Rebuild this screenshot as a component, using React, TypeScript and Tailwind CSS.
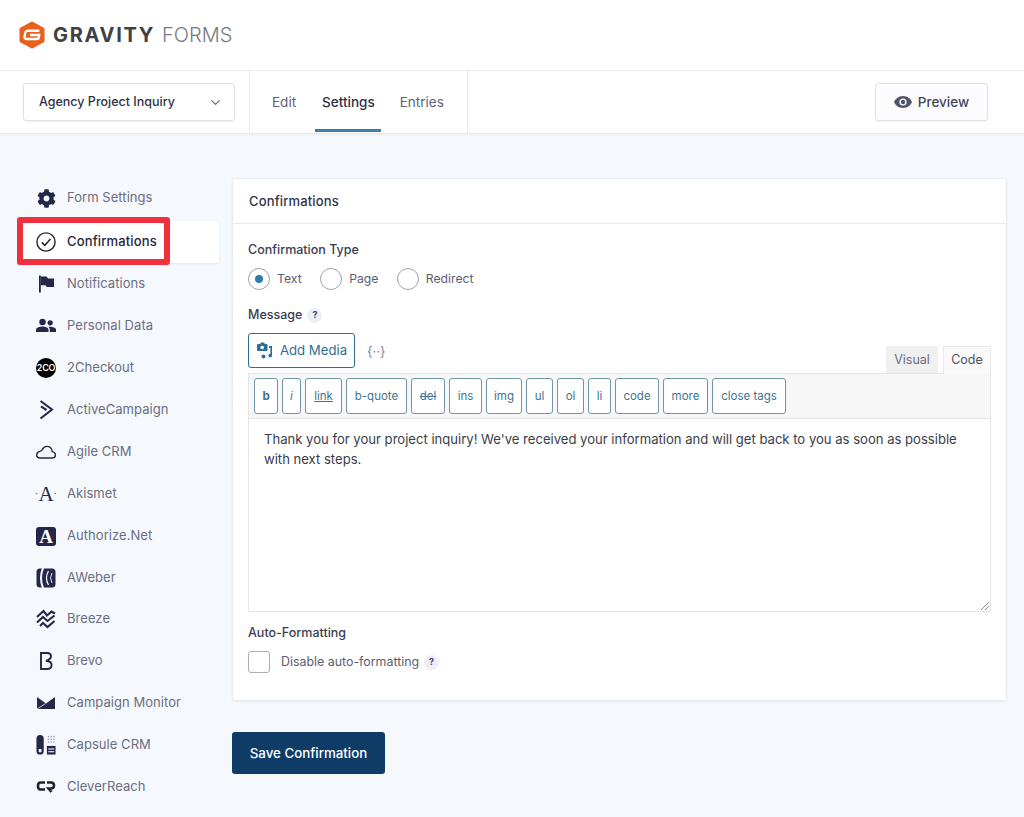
import React from 'react';
import { ChevronDown } from 'lucide-react';
import { FaCog } from 'react-icons/fa';

const NAVY = '#242748';

const GravityLogo = () => (
    <svg width="26" height="28" viewBox="0 0 26 28" className="shrink-0">
        <path d="M13 2 L24 8 V20 L13 26 L2 20 V8 Z" fill="#e8601c" stroke="#e8601c" strokeWidth="3" strokeLinejoin="round" />
        <path d="M20.4 9.8 H9 Q6.8 9.8 6.2 12 L5.6 15.4 Q5.2 18 7.6 18 H18 Q19.6 18 19.8 16.5 L20.2 14 H11" fill="none" stroke="#fff" strokeWidth="2.4" />
    </svg>
);

const CheckCircleIcon = () => (
    <svg width="20" height="20" viewBox="0 0 20 20" fill="none" stroke="#1f2433">
        <circle cx="10" cy="10" r="9.1" strokeWidth="1.4" />
        <path d="M5.8 10.4 L8.8 13.4 L14.4 7" strokeWidth="1.5" />
    </svg>
);

const FlagIcon = () => (
    <svg width="20" height="20" viewBox="0 0 20 20">
        <path d="M3 1.5 H4.8 V18.5 H3 Z" fill={NAVY} />
        <path d="M4.8 2.5 H10.5 L12 4.5 H18 V13 H10.8 L9.4 11.2 H4.8 Z" fill={NAVY} />
    </svg>
);

const PeopleIcon = () => (
    <svg width="20" height="20" viewBox="0 0 20 20" fill={NAVY}>
        <circle cx="6.5" cy="6" r="3.2" />
        <circle cx="14.2" cy="6.8" r="2.6" />
        <path d="M0 16 V13.8 C0 11.4 4 10.4 6.5 10.4 S12.5 11.4 12.5 13.8 V16 Z" />
        <path d="M13.8 16 V13.6 C13.8 12.6 13.4 11.6 12.6 10.9 C15 10.3 20 11.2 20 13.6 V16 Z" />
    </svg>
);

const TwoCheckoutIcon = () => (
    <span className="flex h-5 w-5 items-center justify-center overflow-hidden rounded-full bg-black text-[9px] font-semibold tracking-[-0.3px] text-white">
        2CO
    </span>
);

const ActiveCampaignIcon = () => (
    <svg width="20" height="20" viewBox="0 0 20 20" fill="none" stroke={NAVY} strokeWidth="2.1">
        <path d="M4.5 1 L16 9.5 L4.5 18.5" />
        <path d="M5 6.4 L10.5 10" />
    </svg>
);

const AgileCloudIcon = () => (
    <svg width="20" height="20" viewBox="0 0 20 20" fill="none" stroke={NAVY} strokeWidth="1.4">
        <path d="M4 16 H16 Q19.4 16 19.4 12.8 Q19.4 10 16.2 9.6 Q15.6 4.4 10.8 4.4 Q7.8 4.4 6.4 7.6 Q5.4 9 4 9.4 Q0.7 10.2 0.7 12.8 Q0.7 16 4 16 Z" />
    </svg>
);

const AkismetIcon = () => (
    <span className="flex h-5 w-5 items-center justify-center whitespace-nowrap font-['Liberation_Serif',serif] text-[21px] leading-none text-[#242748]">
        <span className="text-[10px]">·</span>A<span className="text-[10px]">·</span>
    </span>
);

const AuthorizeIcon = () => (
    <span className="flex h-[19px] w-5 items-center justify-center rounded-[3px] bg-[#242748] font-['Liberation_Serif',serif] text-[19px] font-bold leading-none text-white">
        A
    </span>
);

const AWeberIcon = () => (
    <svg width="20" height="20" viewBox="0 0 20 20">
        <rect x="0.5" y="0.5" width="19" height="19" rx="3.5" fill={NAVY} />
        <path d="M7.4 -1 Q2.6 10 7.4 21" fill="none" stroke="#f5f8fc" strokeWidth="2" />
        <path d="M12.5 3 Q8.4 10 12.5 17" fill="none" stroke="#f5f8fc" strokeWidth="1.3" />
        <path d="M16 5 Q13 10 16 15" fill="none" stroke="#f5f8fc" strokeWidth="0.9" />
    </svg>
);

const BreezeIcon = () => (
    <svg width="20" height="20" viewBox="0 0 20 20" fill="none" stroke={NAVY} strokeWidth="2.1">
        <path d="M1 8 L7.5 2 L11 6.5 L15.5 2.5 L19 4.5" />
        <path d="M1 13.5 L7 8 L11.5 12 L18.5 6.5" />
        <path d="M4 17 L7 14 L11.5 18 L18.5 12" />
    </svg>
);

const BrevoIcon = () => (
    <svg width="20" height="20" viewBox="0 0 20 20" fill="none" stroke={NAVY} strokeWidth="1.9">
        <path d="M5 2 H11.5 Q15 2 15 5.3 Q15 8.3 10 10 Q15.6 10 15.6 14 Q15.6 18 11 18 H5 Z" />
    </svg>
);

const CampaignMonitorIcon = () => (
    <svg width="20" height="20" viewBox="0 0 20 20">
        <path d="M1 4 L10 10.5 L19 4 V16 H1 Z" fill={NAVY} />
        <path d="M1 16 L9.5 10.6" stroke="#f5f8fc" strokeWidth="0.8" />
    </svg>
);

const CapsuleIcon = () => (
    <svg width="22" height="22" viewBox="0 0 22 22">
        <rect x="0.5" y="0" width="8" height="21.5" rx="4" fill={NAVY} />
        <path d="M3 15.5 H6 V18 L4.5 19.5 L3 18 Z" fill="#f5f8fc" />
        <g fill="#8d90a8">
            <rect x="13" y="1" width="1.4" height="1.4" />
            <rect x="16" y="1" width="1.4" height="1.4" />
            <rect x="19" y="1" width="1.4" height="1.4" />
            <rect x="13" y="4" width="1.4" height="1.4" />
            <rect x="16" y="4" width="1.4" height="1.4" />
            <rect x="19" y="4" width="1.4" height="1.4" />
            <rect x="13" y="7" width="1.4" height="1.4" />
            <rect x="16" y="7" width="1.4" height="1.4" />
            <rect x="19" y="7" width="1.4" height="1.4" />
        </g>
        <rect x="12" y="12" width="9.5" height="9.5" fill={NAVY} />
        <rect x="13.5" y="14.8" width="6.5" height="1.2" fill="#f5f8fc" />
        <rect x="13.5" y="17.8" width="6.5" height="1.2" fill="#f5f8fc" />
    </svg>
);

const CleverReachIcon = () => (
    <svg width="20" height="20" viewBox="0 0 20 20" fill="none" stroke="#1f2433" strokeWidth="2.6">
        <path d="M9 5.5 H4.5 Q2 5.5 2 9 Q2 12.5 4.5 12.5 H9" />
        <path d="M11 5.5 H15 Q18 5.5 18 8.5 Q18 11.5 15 11.5 H12.5 L15.5 15" />
    </svg>
);

const NAV_ITEMS = [
    { label: 'Form Settings', icon: <FaCog size={19} color={NAVY} />, height: 'h-[44px] mb-[1px]' },
    { label: 'Confirmations', icon: <CheckCircleIcon />, height: 'h-[42px]', active: true },
    { label: 'Notifications', icon: <FlagIcon />, height: 'h-[42px]' },
    { label: 'Personal Data', icon: <PeopleIcon />, height: 'h-[42px]' },
    { label: '2Checkout', icon: <TwoCheckoutIcon />, height: 'h-[42px]' },
    { label: 'ActiveCampaign', icon: <ActiveCampaignIcon />, height: 'h-[42px]' },
    { label: 'Agile CRM', icon: <AgileCloudIcon />, height: 'h-[42px]' },
    { label: 'Akismet', icon: <AkismetIcon />, height: 'h-[42px]' },
    { label: 'Authorize.Net', icon: <AuthorizeIcon />, height: 'h-[42px]' },
    { label: 'AWeber', icon: <AWeberIcon />, height: 'h-[41px]' },
    { label: 'Breeze', icon: <BreezeIcon />, height: 'h-[42px]' },
    { label: 'Brevo', icon: <BrevoIcon />, height: 'h-[42px]' },
    { label: 'Campaign Monitor', icon: <CampaignMonitorIcon />, height: 'h-[42px]' },
    { label: 'Capsule CRM', icon: <CapsuleIcon />, height: 'h-[42px]' },
    { label: 'CleverReach', icon: <CleverReachIcon />, height: 'h-[41px]' },
];

const TOOLBAR_BUTTONS = [
    { label: 'b', width: 'w-[24px]', extra: 'font-bold' },
    { label: 'i', width: 'w-[19px]', extra: 'italic' },
    { label: 'link', width: 'w-[37px]', extra: 'underline' },
    { label: 'b-quote', width: 'w-[61px]', extra: '' },
    { label: 'del', width: 'w-[34px]', extra: 'line-through' },
    { label: 'ins', width: 'w-[33px]', extra: '' },
    { label: 'img', width: 'w-[36px]', extra: '' },
    { label: 'ul', width: 'w-[27px]', extra: '' },
    { label: 'ol', width: 'w-[27px]', extra: '' },
    { label: 'li', width: 'w-[23px]', extra: '' },
    { label: 'code', width: 'w-[44px]', extra: '' },
    { label: 'more', width: 'w-[45px]', extra: '' },
    { label: 'close tags', width: 'w-[74px]', extra: '' },
];

const HelpBadge = () => (
    <span className="flex h-[15px] w-[15px] items-center justify-center rounded-full bg-[#eeeef8] text-[9px] font-bold text-[#3d4260]">?</span>
);

const Radio = ({ label, checked }: { label: string; checked?: boolean }) => (
    <div className="flex items-center gap-[7px]">
        <span className="flex h-[22px] w-[22px] items-center justify-center rounded-full border border-[#9ea3ac] bg-white">
            {checked && <span className="h-[8px] w-[8px] rounded-full bg-[#2f7cab]" />}
        </span>
        <span className="text-[12.2px] text-[#5b5e72]">{label}</span>
    </div>
);

export default function App() {
    return (
        <div className="h-[817px] w-[1024px] overflow-hidden bg-[#f5f8fc] font-['Inter',sans-serif] text-[13px]">
            <header className="flex h-[71px] items-center border-b border-[#e8eaee] bg-white pl-[19px]">
                <GravityLogo />
                <span className="ml-[8px] text-[20px] font-bold leading-none tracking-[1.7px] text-[#3f4145]">GRAVITY</span>
                <span className="ml-[7px] text-[20px] font-light leading-none tracking-[0px] text-[#77797d]">FORMS</span>
            </header>

            <div className="flex h-[63px] items-stretch border-b border-[#e6e9ee] bg-white shadow-[0_1px_2px_rgba(30,40,70,0.05)]">
                <div className="flex w-[250px] items-center border-r border-[#e8eaee] pl-[23px]">
                    <div className="flex h-[38px] w-[212px] items-center justify-between rounded-[3px] border border-[#dcdfe6] bg-white pl-[15px] pr-[11px] shadow-[0_1px_2px_rgba(30,40,70,0.06)]">
                        <span className="text-[12.5px] font-medium text-[#2f3245]">Agency Project Inquiry</span>
                        <ChevronDown size={15} color="#6e7184" />
                    </div>
                </div>
                <nav className="flex w-[218px] items-stretch border-r border-[#e8eaee] pl-[22px] pt-[1px] text-[13.5px]">
                    <div className="flex items-center text-[#5f6275]">Edit</div>
                    <div className="ml-[26px] flex items-center font-medium text-[#2f3245]">Settings</div>
                    <div className="ml-[25px] flex items-center text-[#5f6275]">Entries</div>
                </nav>
                <div className="flex flex-1 items-center justify-end pr-[36px]">
                    <div className="flex h-[38px] w-[113px] items-center justify-center gap-[6px] rounded-[3px] border border-[#e0e2e8] bg-[#fcfcfe] shadow-[0_1px_2px_rgba(30,40,70,0.06)]">
                        <svg width="18" height="12" viewBox="0 0 18 12">
                            <path d="M9 0 C13.5 0 16.8 3 18 6 C16.8 9 13.5 12 9 12 C4.5 12 1.2 9 0 6 C1.2 3 4.5 0 9 0 Z" fill="#50546e" />
                            <circle cx="9" cy="6" r="3.6" fill="#fff" />
                            <circle cx="9" cy="6" r="2.2" fill="#50546e" />
                        </svg>
                        <span className="text-[13.5px] font-medium text-[#42465c]">Preview</span>
                    </div>
                </div>
            </div>

            <div className="flex items-start">
                <aside className="mt-[42px] w-[232px] shrink-0">
                    {NAV_ITEMS.map((item) => (
                        <div key={item.label} className={`flex ${item.height} items-center`}>
                            <div className={`ml-[20px] flex h-full w-[199px] items-center gap-[16px] rounded-r-[3px] pl-[16px] ${item.active ? 'bg-white shadow-[0_1px_2px_rgba(30,40,70,0.08)]' : ''}`}>
                                <span className="flex w-[20px] shrink-0 items-center justify-center">{item.icon}</span>
                                <span className={`-ml-[5px] text-[13px] ${item.active ? 'font-medium tracking-[0.15px] text-[#23263a]' : 'tracking-[0.05px] text-[#6b6e82]'}`}>{item.label}</span>
                            </div>
                        </div>
                    ))}
                </aside>

                <main className="w-[775px]">
                    <section className="mt-[44px] h-[523px] rounded-[3px] border border-[#e8ebf0] bg-white shadow-[0_1px_3px_rgba(30,40,70,0.05)]">
                        <h2 className="flex h-[45px] items-center border-b border-[#e8ebf0] pl-[16px] pt-[2px] text-[13px] font-medium tracking-[0.15px] text-[#2f3245]">Confirmations</h2>
                        <div className="px-[15px] pt-[18px]">
                            <div className="text-[12.5px] font-medium leading-[16px] text-[#3a3d50]">Confirmation Type</div>
                            <div className="mt-[10px] flex items-center gap-[18.5px]">
                                <Radio label="Text" checked />
                                <Radio label="Page" />
                                <Radio label="Redirect" />
                            </div>
                            <div className="mt-[17px] flex items-center gap-[5px] text-[12.5px] font-medium leading-[16px] text-[#3a3d50]">
                                Message <HelpBadge />
                            </div>

                            <div className="relative mt-[10px] flex h-[40px] items-start">
                                <div className="flex h-[35px] w-[107px] items-center justify-center gap-[7px] rounded-[3px] border border-[#2f6f90] bg-white">
                                    <svg width="17" height="17" viewBox="0 0 17 17" fill="#2f6f90">
                                        <path d="M5 0.5 L8 0.5 L9 2 H10.5 Q11.5 2 11.5 3 V8 Q11.5 9 10.5 9 H2 Q1 9 1 8 V3 Q1 2 2 2 H4 Z" />
                                        <circle cx="6.2" cy="5.5" r="1.8" fill="#fff" />
                                        <path d="M13 4 H16 V13.5 A1.8 1.8 0 1 1 14.4 11.8 V6 H13 Z" />
                                        <circle cx="7.5" cy="14.5" r="2" />
                                    </svg>
                                    <span className="pt-[1px] text-[13.2px] text-[#2f6f90]">Add Media</span>
                                </div>
                                <span className="ml-[12px] mt-[10px] text-[13px] leading-[16px] text-[#80869a]">{'{··}'}</span>
                                <div className="ml-auto mt-[13px] flex h-[27px] items-stretch gap-[5px] text-[12.5px]">
                                    <div className="flex w-[52px] items-center justify-center border border-[#f0f0f1] bg-[#f0f0f1] pt-[1px] text-[#6b6e76]">Visual</div>
                                    <div className="z-10 flex h-[28px] w-[48px] items-center justify-center border border-b-0 border-[#e8e9ec] bg-[#f9f9f9] text-[#50535c]">Code</div>
                                </div>
                            </div>

                            <div className="border border-[#e4e5e9]">
                                <div className="flex h-[45px] items-start gap-[4px] border-b border-[#e4e5e9] bg-[#f7f7f7] pl-[5px] pt-[4px]">
                                    {TOOLBAR_BUTTONS.map((btn) => (
                                        <div
                                            key={btn.label}
                                            className={`flex h-[36px] ${btn.width} ${btn.extra} items-center justify-center rounded-[3px] border border-[#6f96ab] bg-white pt-[1px] text-[11.5px] text-[#3e7490]`}
                                        >
                                            {btn.label}
                                        </div>
                                    ))}
                                </div>
                                <div className="relative h-[192px] bg-white px-[15px] pt-[10px] text-[13.08px] leading-[20px] text-[#3a3d48]">
                                    Thank you for your project inquiry! We've received your information and will get back to you as soon as possible with next steps.
                                    <svg width="8" height="8" viewBox="0 0 8 8" className="absolute bottom-[1px] right-[1px]" stroke="#8a8d92" strokeWidth="1">
                                        <path d="M0 8 L8 0 M4 8 L8 4" />
                                    </svg>
                                </div>
                            </div>

                            <div className="mt-[13px] text-[12.5px] font-medium leading-[16px] text-[#3a3d50]">Auto-Formatting</div>
                            <div className="mt-[10px] flex items-center gap-[5px]">
                                <span className="h-[22px] w-[22px] rounded-[3px] border border-[#a9adb5] bg-white" />
                                <span className="ml-[6px] text-[12.4px] text-[#5b5e72]">Disable auto-formatting</span>
                                <HelpBadge />
                            </div>
                        </div>
                    </section>

                    <button className="mt-[31px] flex h-[42px] w-[153px] items-center justify-center rounded-[3px] bg-[#0e3c67] pt-[2px] text-[13.3px] font-medium text-white">
                        Save Confirmation
                    </button>
                </main>
            </div>

            {/* active tab underline + the red highlight painted on the screenshot */}
            <div className="absolute left-[315px] top-[129px] h-[3px] w-[66px] bg-[#3e7da8]" />
            <div className="absolute left-[17px] top-[217px] h-[48px] w-[153px] rounded-[3px] border-[6px] border-[#f0303f]" />
        </div>
    );
}
